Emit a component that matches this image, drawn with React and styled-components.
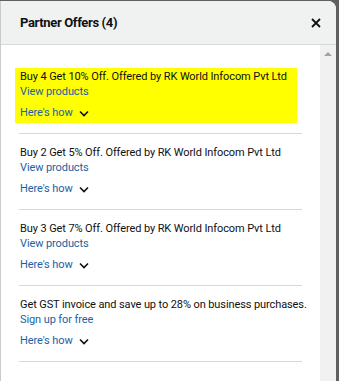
import styled, { createGlobalStyle } from 'styled-components';

const GlobalStyle = createGlobalStyle`
  html, body {
    margin: 0;
    padding: 0;
    background: #5f6060;
    overflow: hidden;
  }
  body {
    font-family: Roboto, Arial, "Liberation Sans", sans-serif;
  }
`;

const offers = [
  { text: 'Buy 4 Get 10% Off. Offered by RK World Infocom Pvt Ltd', link: 'View products', highlight: true },
  { text: 'Buy 2 Get 5% Off. Offered by RK World Infocom Pvt Ltd', link: 'View products' },
  { text: 'Buy 3 Get 7% Off. Offered by RK World Infocom Pvt Ltd', link: 'View products' },
  { text: 'Get GST invoice and save up to 28% on business purchases.', link: 'Sign up for free' },
];

const Modal = styled.div`
  width: 336px;
  height: 380px;
  margin-top: 1px;
  background: #fff;
  border-left: 1px solid #c9cccc;
  border-radius: 0 8px 0 0;
  box-sizing: border-box;
  display: flex;
  flex-direction: column;
  overflow: hidden;
`;

const Header = styled.div`
  height: 43px;
  flex: none;
  display: flex;
  align-items: center;
  justify-content: space-between;
  padding: 0 14px 0 19px;
  background: #f0f2f2;
  border-bottom: 1px solid #d5d9d9;
`;

const Title = styled.h2`
  margin: 0;
  font-size: 13px;
  font-weight: 700;
  letter-spacing: -0.35px;
  color: #0f1111;
`;

const Close = styled.button`
  border: 0;
  padding: 0;
  background: none;
  width: 12px;
  height: 12px;
  display: flex;
  align-items: center;
  justify-content: center;
  cursor: pointer;
`;

const Body = styled.div`
  flex: 1;
  display: flex;
  min-height: 0;
`;

const List = styled.div`
  flex: none;
  width: 283px;
  margin-left: 18px;
  padding-top: 13px;
`;

const Item = styled.div`
  padding: 10px 0;
  border-bottom: 1px solid #d5d9d9;
`;

const Box = styled.div`
  margin-left: -4px;
  width: 282px;
  padding: 1px 5px 3px;
  box-sizing: border-box;
  background: ${(p) => (p.$highlight ? '#ffff00' : 'transparent')};
`;

const Text = styled.div`
  font-size: 11px;
  line-height: 15px;
  letter-spacing: -0.1px;
  color: #0f1111;
  white-space: nowrap;
`;

const Link = styled.a`
  display: block;
  font-size: 11px;
  line-height: 15px;
  letter-spacing: -0.1px;
  color: #2162a1;
  text-decoration: none;
`;

const HowTo = styled.div`
  margin-top: 6px;
  display: flex;
  align-items: center;
  gap: 6px;
  font-size: 11px;
  line-height: 15px;
  letter-spacing: -0.1px;
  color: #2162a1;
`;

const Scrollbar = styled.div`
  margin-left: auto;
  width: 16px;
  background: #f1f1f1;
  display: flex;
  justify-content: center;
  padding-top: 7px;
  box-sizing: border-box;
`;

const ArrowUp = styled.div`
  width: 0;
  height: 0;
  border-left: 4px solid transparent;
  border-right: 4px solid transparent;
  border-bottom: 4px solid #a3a3a3;
`;

const Chevron = () => (
  <svg width="10" height="7" viewBox="0 0 10 7" style={{ marginTop: 1 }}>
    <path d="M1 1.5l4 4 4-4" fill="none" stroke="#0f1111" strokeWidth="1.6" />
  </svg>
);

const App = () => (
  <>
    <GlobalStyle />
    <Modal>
      <Header>
        <Title>Partner Offers (4)</Title>
        <Close aria-label="Close">
          <svg width="10" height="10" viewBox="0 0 10 10">
            <path d="M1 1l8 8M9 1l-8 8" stroke="#0f1111" strokeWidth="1.8" />
          </svg>
        </Close>
      </Header>
      <Body>
        <List>
          {offers.map((o) => (
            <Item key={o.text}>
              <Box $highlight={o.highlight}>
                <Text>{o.text}</Text>
                <Link href="#">{o.link}</Link>
                <HowTo>
                  Here's how
                  <Chevron />
                </HowTo>
              </Box>
            </Item>
          ))}
        </List>
        <Scrollbar>
          <ArrowUp />
        </Scrollbar>
      </Body>
    </Modal>
  </>
);

export default App;
